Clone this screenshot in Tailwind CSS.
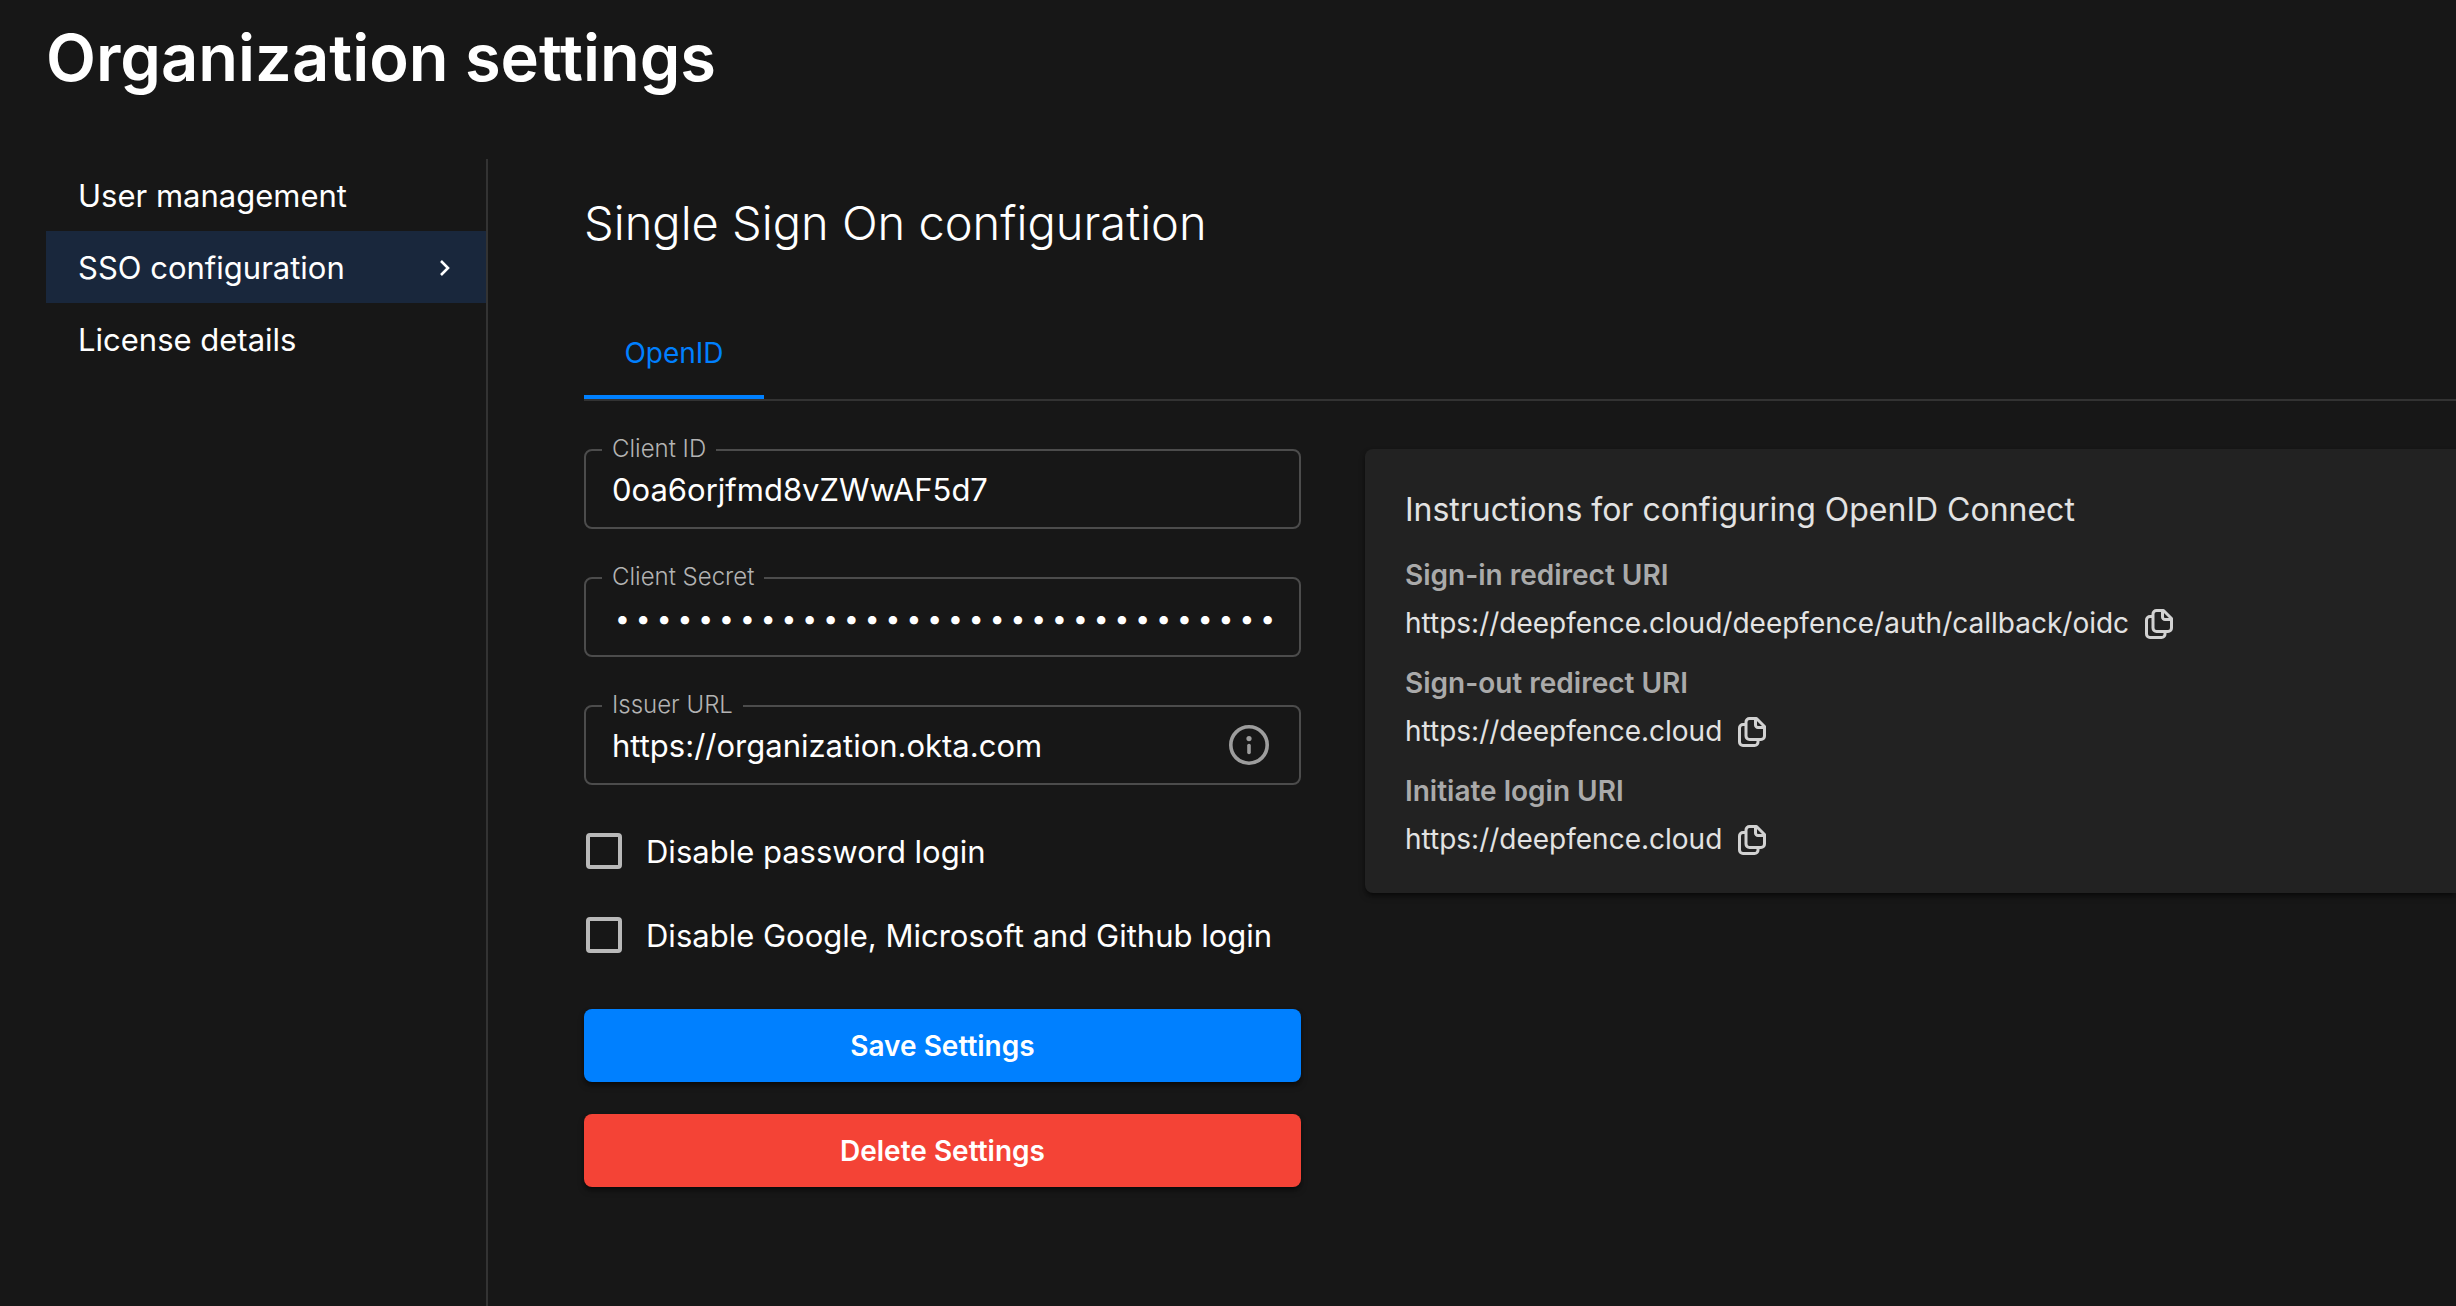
<!DOCTYPE html>
<html lang="en">
<head>
<meta charset="utf-8">
<title>Organization settings</title>
<script src="https://cdn.jsdelivr.net/npm/@tailwindcss/browser@4"></script>
</head>
<body class="flex min-h-screen flex-col overflow-x-hidden bg-[#171717] font-['Inter',sans-serif] text-white">
<svg class="hidden" aria-hidden="true">
  <symbol id="copy" viewBox="0 0 28 30" fill="none" stroke="currentColor" stroke-width="3" stroke-linejoin="round">
    <path d="M7.500 7.500H5a3.500 3.500 0 0 0-3.500 3.500V25A3.500 3.500 0 0 0 5 28.500H16.500A3.500 3.500 0 0 0 20 25V23"/>
    <path d="M11.500 1.500H18.500L26.500 9.500V19A3.500 3.500 0 0 1 23 22.500H11.500A3.500 3.500 0 0 1 8 19V5A3.500 3.500 0 0 1 11.500 1.500Z"/>
    <path d="M17.500 2V8A2.500 2.500 0 0 0 20 10.500H26"/>
  </symbol>
</svg>
<header class="px-[46px] pt-5">
  <h1 class="text-[65px] leading-[76px] font-semibold">Organization settings</h1>
</header>
<div class="mt-[63px] flex flex-1">
  <nav class="w-[488px] shrink-0 border-r-2 border-[#333] pl-[46px] text-[31px] leading-[40px]">
    <a href="#users" class="flex h-[72px] items-center px-8 pt-[2px]">User management</a>
    <a href="#sso" aria-current="page" class="flex h-[72px] items-center justify-between bg-[#19273c] px-8 pt-[2px]">SSO configuration
      <svg class="h-4 w-5" viewBox="0 0 20 16" fill="none" stroke="currentColor" stroke-width="2.600"><path d="M7 1L14 8L7 15"/></svg>
    </a>
    <a href="#license" class="flex h-[72px] items-center px-8 pt-[2px]">License details</a>
  </nav>
  <main class="min-w-0 flex-1 pl-24">
    <h2 class="pt-[34px] text-[47px] leading-[60px] font-light">Single Sign On configuration</h2>
    <div role="tablist" class="mt-[62px] flex border-b-2 border-[#333]">
      <button role="tab" aria-selected="true" class="h-[84px] w-[180px] border-b-4 border-[#0080ff] pt-3 pb-4 text-[28px] leading-9 text-[#0080ff]">OpenID</button>
    </div>
    <div class="mt-12 grid grid-cols-[23fr_35fr] items-start gap-16">
      <form class="flex flex-col gap-12">
        <div class="relative h-20 rounded-lg border-2 border-[#4c4c4c]">
          <label for="cid" class="absolute -top-4 left-4 bg-[#171717] px-[10px] text-2xl leading-7 font-light text-[#b3b3b3]">Client ID</label>
          <input id="cid" type="text" value="0oa6orjfmd8vZWwAF5d7" class="h-full w-full px-[26px] text-[31px] outline-none">
        </div>
        <div class="relative h-20 rounded-lg border-2 border-[#4c4c4c]">
          <label for="secret" class="absolute -top-4 left-4 bg-[#171717] px-[10px] text-2xl leading-7 font-light text-[#b3b3b3]">Client Secret</label>
          <input id="secret" type="password" value="0123456789012345678901234567890123456789" class="h-full w-full px-[26px] text-[37px] font-extralight outline-none">
        </div>
        <div class="relative flex h-20 items-center rounded-lg border-2 border-[#4c4c4c] pr-[30px]">
          <label for="issuer" class="absolute -top-4 left-4 bg-[#171717] px-[10px] text-2xl leading-7 font-light text-[#b3b3b3]">Issuer URL</label>
          <input id="issuer" type="text" value="https://organization.okta.com" class="h-full min-w-0 flex-1 px-[26px] text-[31px] outline-none">
          <svg class="size-10 text-[#9d9d9d]" viewBox="0 0 40 40" fill="none" stroke="currentColor" stroke-width="3.600"><circle cx="20" cy="20" r="18.200"/><circle cx="20" cy="13.600" r="2.600" fill="currentColor" stroke="none"/><path d="M20 20.500V27.500" stroke-linecap="round"/></svg>
        </div>
        <label class="flex h-9 items-center gap-6 pl-[2px] text-[31px] leading-9"><input type="checkbox" class="size-9 shrink-0 appearance-none rounded-[4px] border-4 border-[#b9b9b9]"><span class="pt-[2px]">Disable password login</span></label>
        <label class="flex h-9 items-center gap-6 pl-[2px] text-[31px] leading-9"><input type="checkbox" class="size-9 shrink-0 appearance-none rounded-[4px] border-4 border-[#b9b9b9]"><span class="pt-[2px]">Disable Google, Microsoft and Github login</span></label>
        <div class="mt-2 flex flex-col gap-8">
          <button type="submit" class="h-[73px] rounded-lg bg-[#0080ff] text-[28px] font-semibold shadow-md shadow-black/50">Save Settings</button>
          <button type="button" class="h-[73px] rounded-lg bg-[#f44336] text-[28px] font-semibold shadow-md shadow-black/50">Delete Settings</button>
        </div>
      </form>
      <section class="rounded-l-lg bg-[#222] px-10 pt-[41px] pb-[18px] text-[28px] text-[#e3e3e3] shadow-md shadow-black/50">
        <h3 class="text-[32px] leading-[40px]">Instructions for configuring OpenID Connect</h3>
        <dl class="mt-[21px] leading-[48px]">
          <dt class="font-semibold text-[#aaa]">Sign-in redirect URI</dt>
          <dd class="mb-3 flex items-center gap-4">https://deepfence.cloud/deepfence/auth/callback/oidc<button aria-label="Copy sign-in redirect URI" class="pt-[2px] text-[#d2d2d2]"><svg class="h-[30px] w-7"><use href="#copy"/></svg></button></dd>
          <dt class="font-semibold text-[#aaa]">Sign-out redirect URI</dt>
          <dd class="mb-3 flex items-center gap-4">https://deepfence.cloud<button aria-label="Copy sign-out redirect URI" class="pt-[2px] text-[#d2d2d2]"><svg class="h-[30px] w-7"><use href="#copy"/></svg></button></dd>
          <dt class="font-semibold text-[#aaa]">Initiate login URI</dt>
          <dd class="mb-3 flex items-center gap-4">https://deepfence.cloud<button aria-label="Copy initiate login URI" class="pt-[2px] text-[#d2d2d2]"><svg class="h-[30px] w-7"><use href="#copy"/></svg></button></dd>
        </dl>
      </section>
    </div>
  </main>
</div>
</body>
</html>
